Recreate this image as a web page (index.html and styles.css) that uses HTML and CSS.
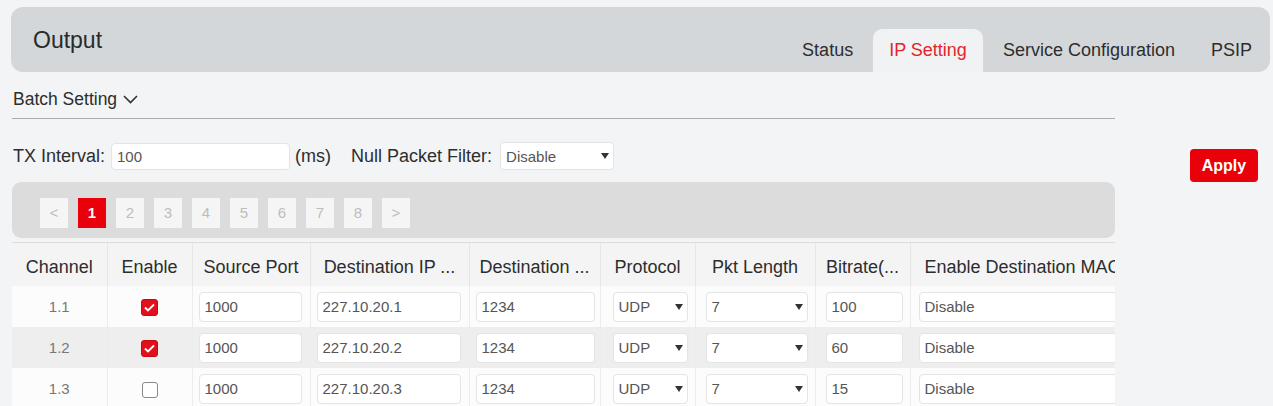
FILE: index.html
```html
<!DOCTYPE html>
<html lang="en">
<head>
<meta charset="utf-8">
<title>Output - IP Setting</title>
<link rel="stylesheet" href="styles.css">
</head>
<body>
<header class="topbar">
  <div class="title">Output</div>
  <nav class="tabs">
    <a class="tab">Status</a>
    <a class="tab active">IP Setting</a>
    <a class="tab">Service Configuration</a>
    <a class="tab">PSIP</a>
  </nav>
</header>
<div class="content">
  <div class="main">
    <div class="batch">Batch Setting <svg class="chev" width="15" height="9" viewBox="0 0 15 9"><polyline points="1,1 7.5,7.5 14,1" fill="none" stroke="#333" stroke-width="1.6"/></svg></div>
    <div class="txrow">
      <span class="lbl">TX Interval:</span>
      <input class="field tx-input" type="text" value="100">
      <span class="unit">(ms)</span>
      <span class="lbl npf">Null Packet Filter:</span>
      <div class="field select npf-sel"><span>Disable</span><i class="caret"></i></div>
    </div>
    <div class="pager">
      <span class="pg">&lt;</span>
      <span class="pg active">1</span>
      <span class="pg">2</span>
      <span class="pg">3</span>
      <span class="pg">4</span>
      <span class="pg">5</span>
      <span class="pg">6</span>
      <span class="pg">7</span>
      <span class="pg">8</span>
      <span class="pg">&gt;</span>
    </div>
    <div class="table-wrap">
      <table class="grid">
        <colgroup>
          <col class="w-ch"><col class="w-en"><col class="w-src"><col class="w-dip"><col class="w-dp"><col class="w-pr"><col class="w-pk"><col class="w-br"><col class="w-mac">
        </colgroup>
        <thead>
          <tr>
            <th>Channel</th><th>Enable</th><th>Source Port</th><th>Destination IP ...</th><th>Destination ...</th><th>Protocol</th><th>Pkt Length</th><th>Bitrate(...</th><th>Enable Destination MAC</th>
          </tr>
        </thead>
        <tbody>
          <tr>
            <td class="ch">1.1</td>
            <td class="en"><span class="cb on"><svg width="11" height="9" viewBox="0 0 11 9"><polyline points="1,4.5 4,7.5 10,1.5" fill="none" stroke="#fff" stroke-width="1.8"/></svg></span></td>
            <td class="c-src"><input class="field" type="text" value="1000"></td>
            <td class="c-dip"><input class="field" type="text" value="227.10.20.1"></td>
            <td class="c-dp"><input class="field" type="text" value="1234"></td>
            <td class="c-pr"><div class="field select"><span>UDP</span><i class="caret"></i></div></td>
            <td class="c-pk"><div class="field select"><span>7</span><i class="caret"></i></div></td>
            <td class="c-br"><input class="field" type="text" value="100"></td>
            <td class="c-mac"><div class="field select"><span>Disable</span><i class="caret"></i></div></td>
          </tr>
          <tr class="alt">
            <td class="ch">1.2</td>
            <td class="en"><span class="cb on"><svg width="11" height="9" viewBox="0 0 11 9"><polyline points="1,4.5 4,7.5 10,1.5" fill="none" stroke="#fff" stroke-width="1.8"/></svg></span></td>
            <td class="c-src"><input class="field" type="text" value="1000"></td>
            <td class="c-dip"><input class="field" type="text" value="227.10.20.2"></td>
            <td class="c-dp"><input class="field" type="text" value="1234"></td>
            <td class="c-pr"><div class="field select"><span>UDP</span><i class="caret"></i></div></td>
            <td class="c-pk"><div class="field select"><span>7</span><i class="caret"></i></div></td>
            <td class="c-br"><input class="field" type="text" value="60"></td>
            <td class="c-mac"><div class="field select"><span>Disable</span><i class="caret"></i></div></td>
          </tr>
          <tr>
            <td class="ch">1.3</td>
            <td class="en"><span class="cb"></span></td>
            <td class="c-src"><input class="field" type="text" value="1000"></td>
            <td class="c-dip"><input class="field" type="text" value="227.10.20.3"></td>
            <td class="c-dp"><input class="field" type="text" value="1234"></td>
            <td class="c-pr"><div class="field select"><span>UDP</span><i class="caret"></i></div></td>
            <td class="c-pk"><div class="field select"><span>7</span><i class="caret"></i></div></td>
            <td class="c-br"><input class="field" type="text" value="15"></td>
            <td class="c-mac"><div class="field select"><span>Disable</span><i class="caret"></i></div></td>
          </tr>
        </tbody>
      </table>
    </div>
  </div>
  <aside class="side">
    <button class="apply" type="button">Apply</button>
  </aside>
</div>
</body>
</html>
```

FILE: styles.css
```css
* { box-sizing: border-box; }

html, body {
  margin: 0;
  padding: 0;
  background: #f2f4f6;
  font-family: "Liberation Sans", Arial, Helvetica, sans-serif;
  color: #2d2d2d;
  overflow: hidden;
}

.topbar {
  margin: 7px 3px 0 11px;
  height: 65px;
  background: #d4d7da;
  border-radius: 12px;
  display: flex;
  justify-content: space-between;
  align-items: stretch;
  padding-right: 2px;
}

.title {
  align-self: center;
  padding-left: 22px;
  padding-top: 2px;
  font-size: 23px;
  color: #2a2a2a;
}

.tabs {
  display: flex;
  align-items: flex-end;
  gap: 4px;
}

.tab {
  height: 43px;
  line-height: 43px;
  padding: 0 16px;
  font-size: 18px;
  color: #2d2d2d;
  border-radius: 9px 9px 0 0;
}

.tab.active {
  background: #f0f2f4;
  color: #e3262c;
}

.content {
  display: flex;
}

.main {
  margin-left: 12px;
  width: 1103px;
}

.batch {
  margin-top: 16px;
  height: 31px;
  line-height: 22px;
  padding-bottom: 8px;
  font-size: 17.5px;
  padding-left: 1px;
  border-bottom: 1px solid #a9abad;
  display: flex;
  align-items: center;
  gap: 6px;
}

.chev { margin-top: 1px; }

.txrow {
  margin-top: 23px;
  height: 28px;
  display: flex;
  align-items: center;
  font-size: 18px;
  padding-left: 1px;
}

.lbl { color: #2d2d2d; }

.field {
  height: 30px;
  background: #fff;
  border: 1px solid #e4e4e4;
  border-radius: 4px;
  font-family: "Liberation Sans", Arial, Helvetica, sans-serif;
  font-size: 15px;
  color: #555;
  padding: 0 5px;
  outline: none;
  margin: 0;
  display: block;
  width: 100%;
}

.tx-input {
  width: 179px;
  height: 27px;
  margin-left: 6px;
}

.unit { margin-left: 5px; }

.npf { margin-left: 20px; }

.select {
  display: flex;
  align-items: center;
  justify-content: space-between;
}

.npf-sel {
  width: 114px;
  height: 28px;
  margin-left: 8px;
  padding-right: 4px;
}

.caret {
  width: 0;
  height: 0;
  border-left: 4.5px solid transparent;
  border-right: 4.5px solid transparent;
  border-top: 6px solid #333;
}

.pager {
  margin-top: 12px;
  height: 56px;
  background: #dcdcdc;
  border-radius: 9px;
  padding: 16px 0 10px 28px;
  display: flex;
  gap: 10px;
}

.pg {
  width: 28px;
  height: 30px;
  line-height: 30px;
  text-align: center;
  background: #f5f5f5;
  color: #bdbdbd;
  font-size: 15px;
}

.pg.active {
  background: #e8000b;
  color: #fff;
  font-weight: bold;
}

.table-wrap {
  margin-top: 4px;
  width: 1103px;
  overflow: hidden;
  background: #fff;
  border-top: 1px solid #dcdcdc;
}

.grid {
  border-collapse: collapse;
  table-layout: fixed;
  width: 1127px;
}

.w-ch { width: 95px; }
.w-en { width: 85px; }
.w-src { width: 118px; }
.w-dip { width: 159px; }
.w-dp { width: 131px; }
.w-pr { width: 95px; }
.w-pk { width: 120px; }
.w-br { width: 95px; }
.w-mac { width: 229px; }

.grid th {
  height: 43px;
  background: #f4f4f4;
  font-weight: normal;
  font-size: 18px;
  color: #2d2d2d;
  border-right: 1px solid #e6e6e6;
  white-space: nowrap;
  overflow: hidden;
  text-align: center;
  padding: 6px 0 0 0;
}

.grid th:last-child { text-align: left; padding-left: 14px; }

.grid td {
  height: 41px;
  padding: 0;
  border-right: 1px solid #ececec;
  background: #fcfcfc;
  font-size: 15px;
  color: #777;
}

.grid tr.alt td { background: #eeeeee; }

.grid td.ch, .grid td.en { text-align: center; }

.c-src { padding: 0 8px 0 6px !important; }
.c-dip { padding: 0 8px 0 6px !important; }
.c-dp { padding: 0 5px 0 6px !important; }
.c-pr { padding: 0 7px 0 12px !important; }
.c-pk { padding: 0 7px 0 10px !important; }
.c-br { padding: 0 7px 0 10px !important; }
.c-mac { padding: 0 6px 0 8px !important; }

.c-pr .select, .c-pk .select { padding-right: 4px; }

.cb {
  display: inline-flex;
  align-items: center;
  justify-content: center;
  width: 16px;
  height: 16px;
  border: 1px solid #8a8a8a;
  border-radius: 3px;
  background: #fff;
  vertical-align: middle;
}

.cb.on {
  width: 17px;
  height: 17px;
  background: #e3101b;
  border-color: #c50a12;
}

.side {
  flex: 1;
  display: flex;
  justify-content: flex-end;
  align-items: flex-start;
  padding-top: 77px;
  padding-right: 15px;
}

.apply {
  width: 68px;
  height: 33px;
  background: #e8000b;
  color: #fff;
  border: none;
  border-radius: 4px;
  font-family: "Liberation Sans", Arial, Helvetica, sans-serif;
  font-weight: bold;
  font-size: 16px;
  padding: 0;
}
```
